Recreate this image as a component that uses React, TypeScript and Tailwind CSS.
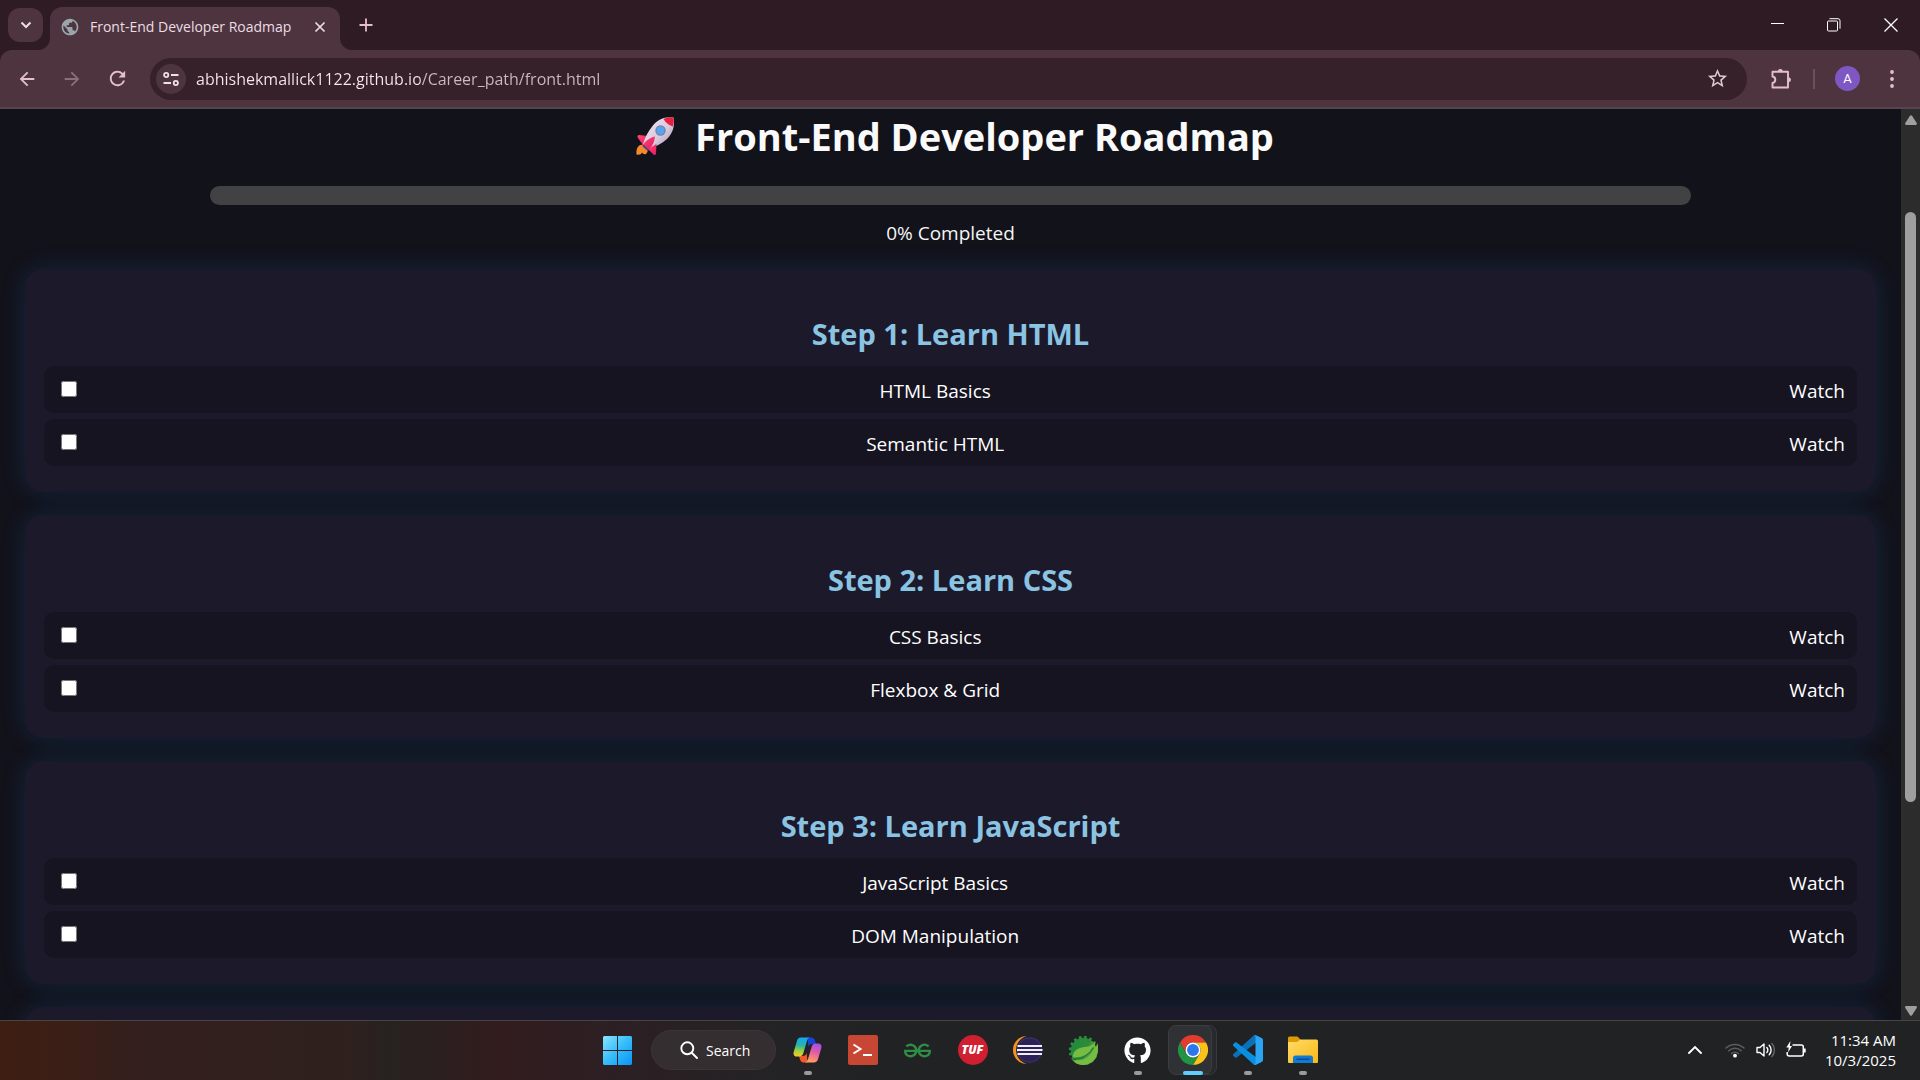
import { useState } from "react";
import type { ReactNode } from "react";
import { MdArrowBack, MdArrowForward, MdPublic, MdRefresh, MdStarBorder } from "react-icons/md";
import { FaGithub } from "react-icons/fa";
import { SiGeeksforgeeks } from "react-icons/si";

type Lesson = { id: string; label: string };
type Step = { title: string; lessons: Lesson[] };

const steps: Step[] = [
  {
    title: "Step 1: Learn HTML",
    lessons: [
      { id: "html-basics", label: "HTML Basics" },
      { id: "semantic-html", label: "Semantic HTML" },
    ],
  },
  {
    title: "Step 2: Learn CSS",
    lessons: [
      { id: "css-basics", label: "CSS Basics" },
      { id: "flexbox-grid", label: "Flexbox & Grid" },
    ],
  },
  {
    title: "Step 3: Learn JavaScript",
    lessons: [
      { id: "js-basics", label: "JavaScript Basics" },
      { id: "dom", label: "DOM Manipulation" },
    ],
  },
];

function Rocket() {
  return (
    <svg viewBox="0 0 40 40" className="size-10 shrink-0" aria-hidden="true">
      <defs>
        <linearGradient id="rk-body" x1="0" y1="0" x2="1" y2="1">
          <stop offset="0" stopColor="#f1e4f2" />
          <stop offset="0.55" stopColor="#d9cbe0" />
          <stop offset="1" stopColor="#a493ae" />
        </linearGradient>
        <linearGradient id="rk-fin" x1="0" y1="0" x2="1" y2="1">
          <stop offset="0" stopColor="#ff4a6a" />
          <stop offset="1" stopColor="#e3176a" />
        </linearGradient>
      </defs>
      <path d="M8.500 28.500c-5 0-7.500 3-7 10 3 0.500 4.500 0 5.500-2 1 1.500 2.500 2 4 1.500 2-2 2.500-5 1.500-8z" fill="#f58a2c" />
      <path d="M13 20 L4 19 C2.500 19 2 20.500 3 22 L8.500 30z" fill="url(#rk-fin)" />
      <path d="M38.500 1.500c-9-1-16 2-21 8.500-4 5-7.500 11-9.500 18l5 5c7-2 14-5.500 19-10 6-6 8-13 6.500-21.500z" fill="url(#rk-body)" />
      <path d="M38.500 1.500c-3.500-0.500-7 0-10 1.500 2 3.500 5 6 9.300 7.500 1-3 1.200-6 0.700-9z" fill="#e6203f" />
      <circle cx="25.500" cy="14.500" r="5.200" fill="#7e7f9c" />
      <circle cx="25.500" cy="14.500" r="3.900" fill="#52a5f5" />
      <path d="M20 20.500c-5 1-10 4.500-12.500 9.500 3 0.500 4.500 1.500 6 4 4-3.500 6-8.500 6.500-13.500z" fill="url(#rk-fin)" />
      <path d="M21.500 28 L21 37 C21 39.500 19 39.500 18 38 L13 33z" fill="url(#rk-fin)" />
      <path d="M8 29.500 L13.500 34.500" stroke="#5c3d80" strokeWidth="1.800" />
    </svg>
  );
}

function IconButton({ label, children, className = "" }: { label: string; children: ReactNode; className?: string }) {
  return (
    <button type="button" aria-label={label} className={`flex shrink-0 items-center justify-center ${className}`}>
      {children}
    </button>
  );
}

function TabStrip() {
  return (
    <header className="flex h-[50px] shrink-0 items-end bg-[#2f1b23] text-[#ecdde3]">
      <IconButton label="Search tabs" className="mb-2 ml-2 h-[34px] w-[35px] rounded-xl bg-[#4e343f]">
        <svg viewBox="0 0 12 12" className="size-3" fill="none" stroke="currentColor" strokeWidth="2">
          <path d="M1.500 3.500 6 8l4.500-4.500" />
        </svg>
      </IconButton>
      <div className="relative ml-[7px] flex h-[43px] w-[290px] items-center rounded-t-xl bg-[#4e343f] pb-1 pl-[10px] pr-[7px]">
        <svg viewBox="0 0 12 12" className="absolute -left-3 bottom-0 size-3" aria-hidden="true">
          <path d="M12 0v12H0A12 12 0 0 0 12 0z" fill="#4e343f" />
        </svg>
        <svg viewBox="0 0 12 12" className="absolute -right-3 bottom-0 size-3" aria-hidden="true">
          <path d="M0 0v12h12A12 12 0 0 1 0 0z" fill="#4e343f" />
        </svg>
        <MdPublic className="size-5 shrink-0 text-[#9aa6ac]" />
        <span className="ml-[10px] flex-1 whitespace-nowrap text-[14px] leading-5">Front-End Developer Roadmap</span>
        <IconButton label="Close tab" className="size-[26px]">
          <svg viewBox="0 0 12 12" className="size-3" fill="none" stroke="currentColor" strokeWidth="1.700">
            <path d="M1.500 1.500l9 9M10.500 1.500l-9 9" />
          </svg>
        </IconButton>
      </div>
      <IconButton label="New tab" className="mb-[9px] ml-[10px] size-8 text-[#e5bfce]">
        <svg viewBox="0 0 14 14" className="size-[14px]" fill="none" stroke="currentColor" strokeWidth="1.800">
          <path d="M7 0.500v13M0.500 7h13" />
        </svg>
      </IconButton>
      <div className="ml-auto flex h-full items-center text-white">
        <IconButton label="Minimize" className="h-full w-14">
          <svg viewBox="0 0 14 14" className="size-[14px]" stroke="currentColor" shapeRendering="crispEdges">
            <path d="M0 5.500h13" />
          </svg>
        </IconButton>
        <IconButton label="Restore" className="h-full w-14">
          <svg viewBox="0 0 14 14" className="size-[14px]" fill="none" stroke="currentColor">
            <rect x="0.500" y="3" width="10" height="10" rx="1" />
            <path d="M2.500 0.700h8.500a2 2 0 0 1 2 2v8" />
          </svg>
        </IconButton>
        <IconButton label="Close window" className="h-full w-[58px]">
          <svg viewBox="0 0 14 14" className="size-[14px]" fill="none" stroke="currentColor" strokeWidth="1.300">
            <path d="M0.500 0.500l13 13M13.500 0.500l-13 13" />
          </svg>
        </IconButton>
      </div>
    </header>
  );
}

function Toolbar() {
  return (
    <div className="shrink-0 bg-[#2f1b23]">
      <nav className="flex h-[59px] items-center rounded-t-xl border-b-2 border-[#56454a] bg-[#4e343f] text-[#e5bfce]">
        <IconButton label="Back" className="ml-[11px] size-8">
          <MdArrowBack className="size-[22px]" />
        </IconButton>
        <IconButton label="Forward" className="ml-[13px] size-8 text-[#8c7079]">
          <MdArrowForward className="size-[22px]" />
        </IconButton>
        <IconButton label="Reload" className="ml-[13px] size-8">
          <MdRefresh className="size-[23px]" />
        </IconButton>
        <div className="ml-[17px] flex h-[42px] min-w-0 flex-1 items-center rounded-full bg-[#36212a] pl-[6px] pr-[14px]">
          <IconButton label="View site information" className="size-[30px] rounded-full bg-[#4e343f] text-[#f0e0e6]">
            <svg viewBox="0 0 16 16" className="size-4" fill="none" stroke="currentColor" strokeWidth="1.800">
              <circle cx="3.200" cy="4" r="2.100" />
              <path d="M8 4h7.500M0.500 12h7.500" />
              <circle cx="12.800" cy="12" r="2.100" />
            </svg>
          </IconButton>
          <input
            type="text"
            aria-label="Address"
            defaultValue="abhishekmallick1122.github.io/Career_path/front.html"
            className="ml-[10px] h-8 min-w-0 flex-1 bg-[linear-gradient(to_right,#f7e9ee_224px,#cdb9c0_224px)] bg-clip-text text-[16px] text-transparent outline-none"
          />
          <IconButton label="Bookmark this tab" className="size-8 text-[#dccbd1]">
            <MdStarBorder className="size-[23px]" />
          </IconButton>
        </div>
        <IconButton label="Extensions" className="ml-[18px] size-8">
          <svg viewBox="0 0 22 22" className="size-[22px]" fill="none" stroke="currentColor" strokeWidth="1.900" strokeLinejoin="round">
            <path d="M2.500 3.800h15.500v15.700H2.500v-4.600c1.700-0.300 2.800-1.500 2.800-3.200s-1.100-2.900-2.800-3.200z" />
            <path d="M7.800 3.500a2.500 2.500 0 0 1 5 0zM18.500 9.200a2.500 2.500 0 0 1 0 5z" fill="currentColor" stroke="none" />
          </svg>
        </IconButton>
        <div className="ml-4 h-5 w-[2px] bg-[#6b4f59]" />
        <IconButton label="Profile" className="ml-5 size-[25px] rounded-full bg-[#7e57c2] font-[Roboto] text-[13px] text-white">
          A
        </IconButton>
        <IconButton label="Menu" className="ml-4 mr-3 size-8">
          <svg viewBox="0 0 4 18" className="h-[18px] w-1" fill="currentColor">
            <circle cx="2" cy="2" r="1.900" />
            <circle cx="2" cy="9" r="1.900" />
            <circle cx="2" cy="16" r="1.900" />
          </svg>
        </IconButton>
      </nav>
    </div>
  );
}

function Card({ children }: { children?: ReactNode }) {
  return (
    <section className="min-h-[223px] shrink-0 rounded-[19px] bg-[#1c192b] px-[19px] pb-[26px] pt-[45px] shadow-[0_0_25px_rgba(30,135,230,0.190)]">
      {children}
    </section>
  );
}

function StepCard({ step, done, toggle }: { step: Step; done: Set<string>; toggle: (id: string) => void }) {
  return (
    <Card>
      <h2 className="text-center text-[29px] font-bold leading-10 text-[#8ac4e2]">{step.title}</h2>
      <ul className="mt-3 flex flex-col gap-[6px]">
        {step.lessons.map((lesson) => (
          <li key={lesson.id} className="flex h-[47px] items-center justify-between rounded-[10px] bg-[#171421] px-3 text-[19px] leading-7 text-white">
            <input
              id={lesson.id}
              type="checkbox"
              checked={done.has(lesson.id)}
              onChange={() => toggle(lesson.id)}
              className="mb-[2px] ml-[5px] mr-1 size-4"
            />
            <label htmlFor={lesson.id} className="pt-[2px]">{lesson.label}</label>
            <a href="#watch" className="pt-[2px]">Watch</a>
          </li>
        ))}
      </ul>
    </Card>
  );
}

function Scrollbar() {
  return (
    <div className="flex w-[19px] shrink-0 flex-col items-center bg-[#2c2c2c] pb-1 pt-[6px]">
      <svg viewBox="0 0 12 10" className="h-[10px] w-3 shrink-0" fill="#9f9f9f">
        <path d="M5 0.800a1.300 1.300 0 0 1 2 0l4.700 7.200c0.500 1 0 2-1 2H1.300c-1 0-1.500-1-1-2z" />
      </svg>
      <div className="w-[11px] grow-[87] basis-0" />
      <div className="w-[11px] grow-[590] basis-0 rounded-full bg-[#9f9f9f]" />
      <div className="w-[11px] grow-[204] basis-0" />
      <svg viewBox="0 0 12 10" className="h-[10px] w-3 shrink-0" fill="#9f9f9f">
        <path d="M5 9.200a1.300 1.300 0 0 0 2 0l4.700-7.200c0.500-1 0-2-1-2H1.300c-1 0-1.500 1-1 2z" />
      </svg>
    </div>
  );
}

function RoadmapPage() {
  const [done, setDone] = useState<Set<string>>(new Set());
  const total = steps.reduce((n, s) => n + s.lessons.length, 0);
  const percent = Math.round((done.size / total) * 100);
  const toggle = (id: string) =>
    setDone((prev) => {
      const next = new Set(prev);
      if (next.has(id)) next.delete(id);
      else next.add(id);
      return next;
    });

  return (
    <div className="flex min-h-0 flex-1 bg-[#12121a]">
      <main className="flex min-w-0 flex-1 flex-col overflow-hidden px-[25px]">
        <h1 className="flex shrink-0 items-center justify-center gap-5 pl-2 text-[38px] font-bold leading-[54px] text-[#fafafa]">
          <Rocket />
          Front-End Developer Roadmap
        </h1>
        <div
          role="progressbar"
          aria-label="Roadmap progress"
          aria-valuenow={percent}
          className="mx-auto mt-[23px] h-[19px] w-4/5 shrink-0 overflow-hidden rounded-full bg-[#424245]"
        >
          <div className="h-full bg-[#87ceeb]" style={{ width: `${percent}%` }} />
        </div>
        <p className="mt-[14px] shrink-0 text-center text-[19px] leading-7 text-[#f5f5f5]">{percent}% Completed</p>
        <div className="mt-[22px] flex flex-col gap-[23px]">
          {steps.map((step) => (
            <StepCard key={step.title} step={step} done={done} toggle={toggle} />
          ))}
          <Card />
        </div>
      </main>
      <Scrollbar />
    </div>
  );
}

function TaskItem({ label, open, active, children }: { label: string; open?: boolean; active?: boolean; children: ReactNode }) {
  return (
    <button type="button" aria-label={label} className="relative flex h-full w-[55px] items-center justify-center">
      {active && (
        <>
          <span className="absolute left-[6px] h-[50px] w-[46px] rounded-lg border border-[#37393c] bg-[#27292c]" />
          <span className="absolute left-[3px] h-[50px] w-11 rounded-lg border border-[#3b3d40] bg-[#2f3134]" />
        </>
      )}
      <span className="relative flex">{children}</span>
      {open && <span className="absolute bottom-[1px] h-1 w-2 rounded-full bg-[#9b9b9b]" />}
      {active && <span className="absolute bottom-[1px] h-1 w-5 rounded-full bg-[#60cdff]" />}
    </button>
  );
}

function WindowsLogo() {
  return (
    <svg viewBox="0 0 29 29" className="size-[29px]">
      <defs>
        <linearGradient id="win" gradientUnits="userSpaceOnUse" x1="0" y1="0" x2="29" y2="29">
          <stop offset="0" stopColor="#8be3ff" />
          <stop offset="0.500" stopColor="#35bdfb" />
          <stop offset="1" stopColor="#0a95f5" />
        </linearGradient>
      </defs>
      <path d="M1 0h13v14H0V1zM15 0h13l1 1v13H15zM0 15h14v14H1l-1-1zM15 15h14v13l-1 1H15z" fill="url(#win)" />
    </svg>
  );
}

function CopilotLogo() {
  return (
    <svg viewBox="0 0 48 44" className="h-[26px] w-[29px]">
      <defs>
        <linearGradient id="cp-a" x1="0.300" y1="0" x2="0.200" y2="1">
          <stop offset="0" stopColor="#17a6f2" />
          <stop offset="0.400" stopColor="#27b6a6" />
          <stop offset="0.700" stopColor="#a3cf3e" />
          <stop offset="1" stopColor="#ffc928" />
        </linearGradient>
        <linearGradient id="cp-b" x1="0.700" y1="0" x2="0.400" y2="1">
          <stop offset="0" stopColor="#a052e8" />
          <stop offset="0.450" stopColor="#e35aa8" />
          <stop offset="1" stopColor="#ffa35a" />
        </linearGradient>
      </defs>
      <path d="M24 1h7c3 0 4.500 2 5.500 5l2 6h-6c-4 0-6 2-7 5z" fill="#1544d6" />
      <path d="M24 43h-7c-3 0-4.500-2-5.500-5l-2-6h6c4 0 6-2 7-5z" fill="#f0592b" />
      <path d="M12 1h16c-3 1-4 3-5 6l-6 20c-1 3.500-3 6-7 6H6c-4.500 0-7-3-5-9L6 7c1.300-4 3-6 6-6z" fill="url(#cp-a)" />
      <path d="M36 43H20c3-1 4-3 5-6l6-20c1-3.500 3-6 7-6h4c4.500 0 7 3 5 9l-5 17c-1.300 4-3 6-6 6z" fill="url(#cp-b)" />
    </svg>
  );
}

function TerminalLogo() {
  return (
    <svg viewBox="0 0 30 30" className="size-[30px]">
      <rect width="30" height="30" rx="2" fill="#c74634" />
      <path d="M5.500 9.500l7 4.500-7 4.500M15 20h9" fill="none" stroke="#fff" strokeWidth="2" />
    </svg>
  );
}

function TufLogo() {
  return (
    <span className="flex size-[30px] items-center justify-center rounded-full bg-[#d11f32] text-[12px] font-black italic leading-none text-white">
      TUF
    </span>
  );
}

function EclipseLogo() {
  return (
    <svg viewBox="0 0 30 30" className="size-[30px]">
      <circle cx="14" cy="15" r="14" fill="#f7941e" />
      <circle cx="17.500" cy="15" r="14.500" fill="#222325" />
      <circle cx="16.500" cy="15" r="12.800" fill="#3a2f74" />
      <circle cx="16.500" cy="15" r="11.600" fill="#2c2255" />
      <path d="M4.500 11h24.500M4 15h25.500M4.500 19h24.500" stroke="#f1eef8" strokeWidth="1.900" />
    </svg>
  );
}

function SpringLogo() {
  return (
    <svg viewBox="0 0 30 30" className="size-[30px]">
      <defs>
        <linearGradient id="sp" x1="0" y1="0" x2="1" y2="0.400">
          <stop offset="0" stopColor="#1f8a3f" />
          <stop offset="0.700" stopColor="#2f8a3a" />
          <stop offset="1" stopColor="#7cc444" />
        </linearGradient>
      </defs>
      <circle cx="15.500" cy="15.500" r="13.200" fill="none" stroke="#2c8f3c" strokeWidth="3" strokeDasharray="2.600 2.600" />
      <circle cx="15.500" cy="15.500" r="12.800" fill="url(#sp)" />
      <path d="M29.500 8c1 5 0.800 10-1.500 14.500C25 28 20 30 15 30c-4.500 0-8-1.500-10.500-5C10 26 17 24.500 21 21c3.500-3 6.500-7 8.500-13z" fill="#76bc43" />
      <path d="M27.500 6.500c-2 4-6 5-11 5.500C9.500 12.700 5 16 4.500 22.500c7 1.500 13 0 17-4 3-3 5.500-7 6-12z" fill="#76bc43" />
      <path d="M4.500 23.500c9 0.500 16.500-3 21-11" fill="none" stroke="#1f7a35" strokeWidth="1.500" />
    </svg>
  );
}

function ChromeLogo() {
  return (
    <svg viewBox="0 0 48 48" className="size-[30px]">
      <path d="M3.200 12A24 24 0 0 1 44.800 12H24A12 12 0 0 0 13.600 30z" fill="#e33b2e" />
      <path d="M44.800 12A24 24 0 0 1 24 48L34.400 30A12 12 0 0 0 24 12z" fill="#fbc116" />
      <path d="M24 48A24 24 0 0 1 3.200 12L13.600 30A12 12 0 0 0 34.400 30z" fill="#229342" />
      <circle cx="24" cy="24" r="12" fill="#fff" />
      <circle cx="24" cy="24" r="9.500" fill="#2b78ee" />
    </svg>
  );
}

function CodeLogo() {
  return (
    <svg viewBox="0 0 100 100" className="size-[30px]">
      <path d="M96.460 10.800L75.860 0.880C73.470-0.270 70.620 0.210 68.750 2.080L1.300 63.580C-0.520 65.240-0.510 68.090 1.300 69.750L6.810 74.750C8.300 76.100 10.530 76.200 12.130 74.990L93.360 13.370C96.090 11.300 100 13.250 100 16.670V16.430C100 14.030 98.620 11.840 96.460 10.800z" fill="#0b70b8" />
      <path d="M96.460 89.200L75.860 99.120C73.470 100.270 70.620 99.790 68.750 97.920L1.300 36.420C-0.520 34.760-0.510 31.910 1.300 30.250L6.810 25.250C8.300 23.900 10.530 23.800 12.130 25.010L93.360 86.630C96.090 88.700 100 86.750 100 83.330V83.570C100 85.970 98.620 88.160 96.460 89.200z" fill="#0a8ee0" />
      <path d="M75.860 99.130C73.470 100.270 70.620 99.790 68.750 97.920C71.060 100.220 75 98.590 75 95.330V4.670C75 1.410 71.060-0.220 68.750 2.080C70.620 0.210 73.470-0.270 75.860 0.870L96.460 10.780C98.620 11.820 100 14.010 100 16.410V83.590C100 85.990 98.620 88.180 96.460 89.220z" fill="#2aa5f5" />
    </svg>
  );
}

function FolderLogo() {
  return (
    <svg viewBox="0 0 30 28" className="h-[28px] w-[30px]">
      <defs>
        <linearGradient id="fd" x1="0" y1="0" x2="1" y2="1">
          <stop offset="0" stopColor="#ffdb6b" />
          <stop offset="1" stopColor="#f9b912" />
        </linearGradient>
      </defs>
      <path d="M0 6V2a1.500 1.500 0 0 1 1.500-1.500h8L13 4v4H0z" fill="#dd9b05" />
      <path d="M0 6h9l3.500-2.500h16A1.500 1.500 0 0 1 30 5v21a1 1 0 0 1-1 1H1a1 1 0 0 1-1-1z" fill="url(#fd)" />
      <path d="M5 27v-5a2.500 2.500 0 0 1 2.500-2.500h15A2.500 2.500 0 0 1 25 22v5z" fill="#1479d0" />
      <path d="M9 23.300h12" stroke="#0a4d94" strokeWidth="1.400" strokeLinecap="round" />
    </svg>
  );
}

function Taskbar() {
  return (
    <footer className="grid h-[60px] shrink-0 grid-cols-[1fr_auto_1fr] items-center border-t border-[#494544] bg-[linear-gradient(to_right,#3f1e12_0px,#391f17_80px,#331f1e_140px,#2f201d_340px,#272220_390px,#321c1e_500px,#2d1f23_600px,#232325_780px,#202224_1000px)] text-white">
      <div />
      <div className="flex h-full items-center pb-1 pt-[3px]">
        <TaskItem label="Start"><WindowsLogo /></TaskItem>
        <button type="button" className="ml-[6px] mr-1 flex h-10 w-[125px] items-center rounded-full border border-[#3d3436] bg-[#352e31] pl-7 text-[14px]">
          <svg viewBox="0 0 18 18" className="mr-2 size-[18px]" fill="none" stroke="currentColor" strokeWidth="1.900" strokeLinecap="round">
            <circle cx="7.300" cy="7.300" r="6" />
            <path d="M12 12l5 5" />
          </svg>
          Search
        </button>
        <TaskItem label="Copilot" open><CopilotLogo /></TaskItem>
        <TaskItem label="Terminal"><TerminalLogo /></TaskItem>
        <TaskItem label="GeeksforGeeks"><SiGeeksforgeeks className="size-[27px] text-[#2f8d46]" /></TaskItem>
        <TaskItem label="takeUforward"><TufLogo /></TaskItem>
        <TaskItem label="Eclipse"><EclipseLogo /></TaskItem>
        <TaskItem label="Spring Tools"><SpringLogo /></TaskItem>
        <TaskItem label="GitHub Desktop" open><FaGithub className="size-[27px]" /></TaskItem>
        <TaskItem label="Chrome" active><ChromeLogo /></TaskItem>
        <TaskItem label="Visual Studio Code" open><CodeLogo /></TaskItem>
        <TaskItem label="File Explorer" open><FolderLogo /></TaskItem>
      </div>
      <div className="flex items-center justify-end pb-[2px] pr-6">
        <IconButton label="Show hidden icons" className="size-8">
          <svg viewBox="0 0 14 14" className="size-[14px]" fill="none" stroke="currentColor" strokeWidth="1.900" strokeLinecap="round">
            <path d="M1 10l6-6 6 6" />
          </svg>
        </IconButton>
        <IconButton label="Network" className="ml-2 size-8">
          <svg viewBox="0 0 20 16" className="h-4 w-5" fill="none" stroke="#5c5e60" strokeWidth="1.500" strokeLinecap="round">
            <path d="M1 6a13 13 0 0 1 18 0M3.800 8.800a9 9 0 0 1 12.400 0M6.600 11.500a5 5 0 0 1 6.800 0" />
            <circle cx="10" cy="13.700" r="1.900" fill="#fff" stroke="none" />
          </svg>
        </IconButton>
        <IconButton label="Volume" className="size-[30px]">
          <svg viewBox="0 0 20 16" className="h-4 w-5" fill="none" stroke="currentColor" strokeWidth="1.400" strokeLinecap="round" strokeLinejoin="round">
            <path d="M1 5.500h3L8 2v12l-4-3.500H1z" />
            <path d="M10.800 5.500a3.500 3.500 0 0 1 0 5M13.200 3.200a7 7 0 0 1 0 9.600" />
            <path d="M16 1.500a10 10 0 0 1 0 13" stroke="#66686a" />
          </svg>
        </IconButton>
        <IconButton label="Battery" className="size-[30px]">
          <svg viewBox="0 0 20 17" className="h-[17px] w-5" fill="none" stroke="currentColor" strokeWidth="1.500">
            <path d="M6.500 4h8.800a2 2 0 0 1 2 2v7a2 2 0 0 1-2 2H3.200a2 2 0 0 1-2-2v-2" />
            <path d="M18.500 7.500v4" strokeWidth="2.400" />
            <path d="M4.500 0L0.300 6.500h2.500L2 11.500l4-6.500H3.800z" fill="currentColor" stroke="none" />
          </svg>
        </IconButton>
        <div className="ml-[11px] w-[74px] whitespace-nowrap text-right text-[15px] leading-5">
          <div>11:34 AM</div>
          <div>10/3/2025</div>
        </div>
      </div>
    </footer>
  );
}

export default function App() {
  return (
    <div className="flex h-screen flex-col overflow-hidden font-['Open_Sans','Noto_Sans',sans-serif]">
      <TabStrip />
      <Toolbar />
      <RoadmapPage />
      <Taskbar />
    </div>
  );
}
